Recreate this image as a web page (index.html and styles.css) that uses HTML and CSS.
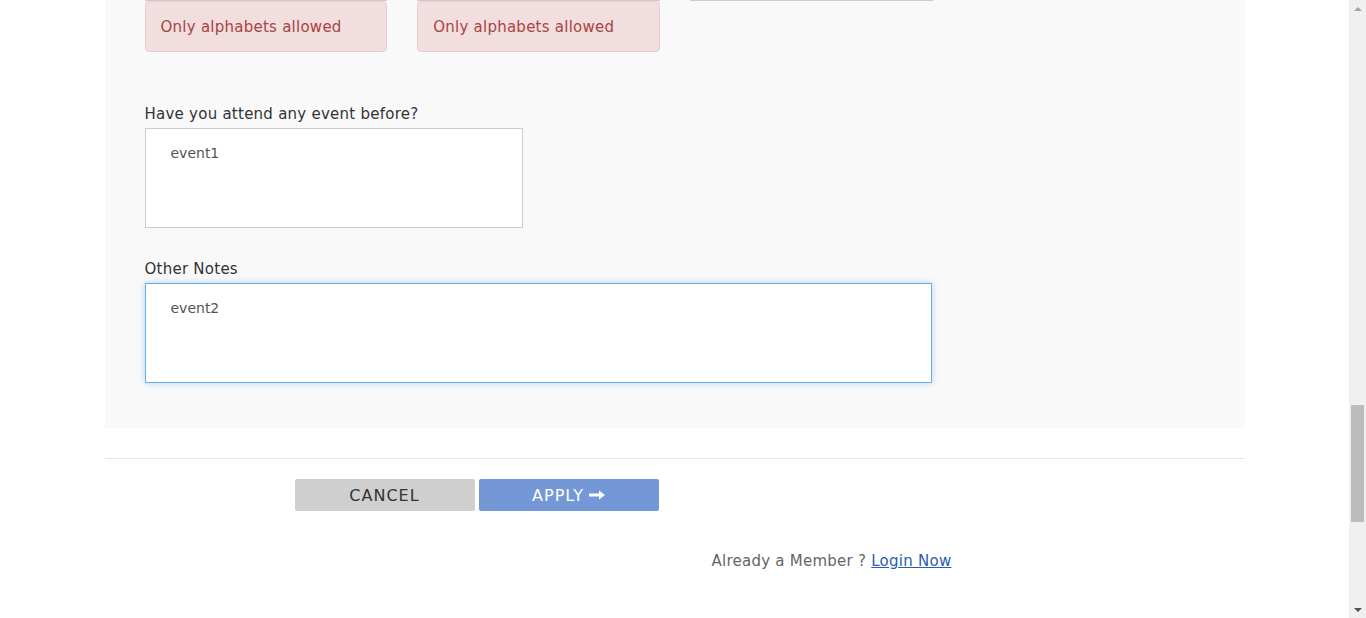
FILE: index.html
```html
<!DOCTYPE html>
<html lang="en">
<head>
<meta charset="utf-8">
<title>Event application</title>
<link rel="stylesheet" href="styles.css">
</head>
<body>
<div class="page">
  <section class="panel">
    <div class="upper"></div>
    <div class="row3">
      <div class="field">
        <input class="input" type="text" value="">
        <div class="error">Only alphabets allowed</div>
      </div>
      <div class="field">
        <input class="input" type="text" value="">
        <div class="error">Only alphabets allowed</div>
      </div>
      <div class="field">
        <input class="input" type="text" value="">
      </div>
    </div>
    <div class="group first">
      <label class="label">Have you attend any event before?</label>
      <textarea class="area half">event1</textarea>
    </div>
    <div class="group">
      <label class="label">Other Notes</label>
      <textarea class="area full focused">event2</textarea>
    </div>
  </section>
  <hr class="sep">
  <div class="actions">
    <button class="btn cancel">CANCEL</button>
    <button class="btn apply">APPLY <svg class="arrow" width="16" height="10" viewBox="0 0 16 10"><path d="M0 3.6h10V0.5L16 5l-6 4.5V6.4H0z" fill="#fff"/></svg></button>
  </div>
  <p class="member">Already a Member ? <a href="#" class="login">Login Now</a></p>
  <div class="tail"></div>
</div>
<div class="scrollbar" aria-hidden="true">
  <span class="sb-up"></span>
  <div class="sb-track"><span class="sb-thumb"></span></div>
  <span class="sb-down"></span>
</div>
<script src="script.js"></script>
</body>
</html>
```
FILE: styles.css
```css
html, body {
  margin: 0;
  padding: 0;
  background: #fff;
}
body {
  font-family: "DejaVu Sans", "Open Sans", sans-serif;
  font-size: 15px;
  letter-spacing: 0.25px;
  color: #333;
  padding-right: 17px;
}
.page {
  width: 1140px;
  margin: 0 auto;
}
.panel {
  background: #f9f9f9;
  padding: 0 40px 45px;
}
.upper {
  height: 2017px;
}
.row3 {
  display: grid;
  grid-template-columns: repeat(3, 1fr);
  column-gap: 30px;
  width: 788px;
  align-items: start;
}
.field {
  display: flex;
  flex-direction: column;
}
.input {
  box-sizing: border-box;
  height: 34px;
  width: 100%;
  border: 1px solid #ccc;
  background: #fff;
  margin: 0;
}
.error {
  box-sizing: border-box;
  height: 51px;
  background: #f2dede;
  border: 1px solid #ebccd1;
  border-radius: 4px;
  color: #a94442;
  padding: 15px 15px;
  line-height: 20px;
  font-size: 15px;
}
.group {
  display: flex;
  flex-direction: column;
  margin-top: 31px;
}
.group.first {
  margin-top: 52px;
}
.label {
  line-height: 20px;
  margin-bottom: 4px;
  color: #333;
}
.area {
  box-sizing: border-box;
  height: 100px;
  border: 1px solid #ccc;
  background: #fff;
  font-family: inherit;
  font-size: 14px;
  letter-spacing: 0;
  color: #555;
  line-height: 20px;
  padding: 14px 25px;
  resize: none;
  margin: 0;
  outline: none;
}
.area.half { width: 378px; }
.area.full { width: 787px; }
.area.focused {
  border-color: #66afe9;
  box-shadow: 0 0 6px rgba(102, 175, 233, 0.5);
}
.sep {
  border: 0;
  border-top: 1px solid #e5e5e5;
  margin: 30px 0 0;
  height: 0;
}
.actions {
  display: flex;
  gap: 4px;
  padding-left: 190px;
  margin-top: 20px;
}
.btn {
  width: 180px;
  height: 32px;
  border: 0;
  border-radius: 2px;
  font-family: inherit;
  font-size: 16px;
  letter-spacing: 1px;
  display: flex;
  align-items: center;
  justify-content: center;
  gap: 5px;
  padding: 0;
}
.cancel {
  background: #cfcfcf;
  color: #333;
}
.apply {
  background: #7498d6;
  color: #fff;
}
.arrow { display: block; }
.member {
  margin: 40px 0 0;
  padding-left: 607px;
  line-height: 20px;
  font-size: 15px;
  color: #666;
}
.login {
  color: #2a5db0;
  text-decoration: underline;
}
.tail {
  height: 465px;
}
.scrollbar {
  position: fixed;
  top: 0;
  right: 0;
  width: 17px;
  height: 100%;
  background: #f0f0f0;
  display: flex;
  flex-direction: column;
}
.sb-up, .sb-down {
  height: 17px;
  display: flex;
  align-items: center;
  justify-content: center;
}
.sb-up::before {
  content: "";
  border-left: 4px solid transparent;
  border-right: 4px solid transparent;
  border-bottom: 4px solid #a3a3a3;
}
.sb-down::before {
  content: "";
  border-left: 4px solid transparent;
  border-right: 4px solid transparent;
  border-top: 4px solid #505050;
}
.sb-track {
  flex: 1;
  padding-top: 388px;
}
.sb-thumb {
  display: block;
  margin: 0 2px;
  height: 117px;
  background: #bcbcbc;
}
```
FILE: script.js
```js
window.scrollTo(0, 2050);
window.addEventListener('load', function () { window.scrollTo(0, 2050); });
```
